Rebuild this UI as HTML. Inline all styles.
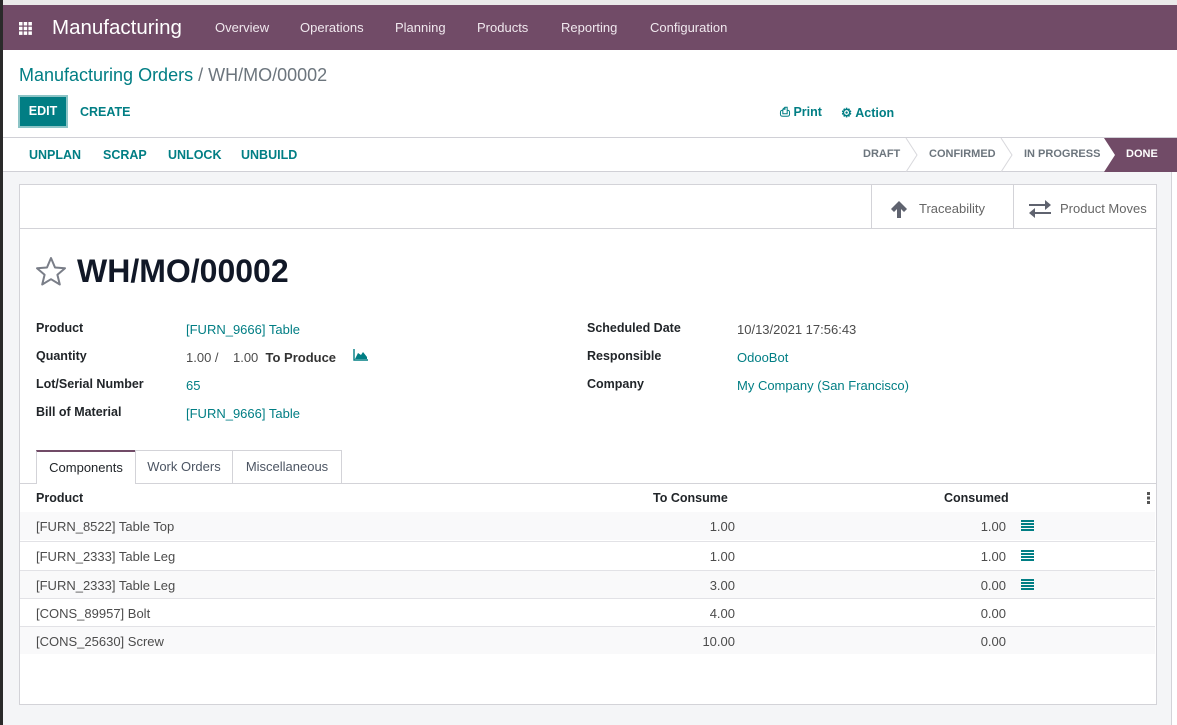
<!DOCTYPE html>
<html><head><meta charset="utf-8"><style>
*{box-sizing:border-box;margin:0;padding:0}
body{width:1177px;height:725px;overflow:hidden;background:#f4f5f7;font-family:"Liberation Sans",sans-serif;font-size:13px;color:#4c4c4c;position:relative}
.abs{position:absolute}
.nav{left:3px;top:5px;width:1174px;height:45px;background:#714b67;color:#fff}
.nav span{position:absolute;top:15px;font-size:13px;color:#f0e8ee}
.cp{left:3px;top:50px;width:1174px;height:88px;background:#fff;border-bottom:1px solid #d0d0d6}
.sb{left:3px;top:138px;width:1174px;height:34px;background:#fff;border-bottom:1px solid #d0d0d6}
.teal{color:#017e84}
.btn{font-weight:bold;font-size:12.5px;color:#017e84}
.sheet{left:19px;top:184px;width:1138px;height:521px;background:#fff;border:1px solid #d3d3d8}
.lbl{font-weight:bold;color:#212529;font-size:12.5px}
.row{left:20px;width:1135px;height:28px;border-top:1px solid #e2e2e6}
.row span{position:absolute;top:7px}
.li{position:absolute;left:1001px;top:8px}
</style></head><body>
<div class="abs" style="left:0;top:0;width:1177px;height:5px;background:#eaeaea"></div>
<div class="abs" style="left:0;top:0;width:3px;height:725px;background:#2a2a2a"></div>
<div class="abs nav">
 <svg class="abs" style="left:16px;top:17px" width="13" height="13" viewBox="0 0 13 13" fill="#fff"><rect x="0" y="0" width="3.5" height="3.5"/><rect x="4.7" y="0" width="3.5" height="3.5"/><rect x="9.4" y="0" width="3.5" height="3.5"/><rect x="0" y="4.7" width="3.5" height="3.5"/><rect x="4.7" y="4.7" width="3.5" height="3.5"/><rect x="9.4" y="4.7" width="3.5" height="3.5"/><rect x="0" y="9.4" width="3.5" height="3.5"/><rect x="4.7" y="9.4" width="3.5" height="3.5"/><rect x="9.4" y="9.4" width="3.5" height="3.5"/></svg>
 <span style="left:49px;top:11px;font-size:20.5px;color:#fff">Manufacturing</span>
 <span style="left:212px">Overview</span><span style="left:297px">Operations</span><span style="left:392px">Planning</span><span style="left:474px">Products</span><span style="left:558px">Reporting</span><span style="left:647px">Configuration</span>
</div>
<div class="abs cp">
 <div class="abs" style="left:16px;top:15px;font-size:18px"><span class="teal">Manufacturing Orders</span> <span style="color:#6c757d">/ WH/MO/00002</span></div>
 <div class="abs" style="left:15px;top:45px;width:50px;height:33px;background:#017e84;border:2px solid #8cc4c6;color:#fff;font-weight:bold;font-size:12.5px;text-align:center;line-height:29px">EDIT</div>
 <div class="abs btn" style="left:77px;top:55px">CREATE</div>
 <div class="abs btn" style="left:777px;top:55px">⎙ Print</div>
 <div class="abs btn" style="left:838px;top:55px">⚙ Action</div>
</div>
<div class="abs sb">
 <div class="abs btn" style="left:26px;top:10px">UNPLAN</div>
 <div class="abs btn" style="left:100px;top:10px">SCRAP</div>
 <div class="abs btn" style="left:165px;top:10px">UNLOCK</div>
 <div class="abs btn" style="left:238px;top:10px">UNBUILD</div>
 <div class="abs" style="left:860px;top:10px;font-size:11px;font-weight:bold;color:#6c757d">DRAFT</div>
 <div class="abs" style="left:926px;top:10px;font-size:11px;font-weight:bold;color:#6c757d">CONFIRMED</div>
 <div class="abs" style="left:1021px;top:10px;font-size:11px;font-weight:bold;color:#6c757d">IN PROGRESS</div>
 <svg class="abs" style="left:0;top:0" width="1174" height="34"><g fill="none" stroke="#d8d8dc"><path d="M903 0 L914 17 L903 34"/><path d="M998 0 L1009 17 L998 34"/></g><path d="M1101 0 H1174 V34 H1101 L1112 17 Z" fill="#714b67"/></svg>
 <div class="abs" style="left:1123px;top:10px;font-size:11px;font-weight:bold;color:#fff">DONE</div>
</div>
<div class="abs" style="left:1171px;top:172px;width:6px;height:553px;background:#fff;border-left:1px solid #d3d3d8"></div>
<div class="abs sheet">
 <div class="abs" style="left:0;top:0;width:1136px;height:44px;border-bottom:1px solid #d3d3d8"></div>
 <div class="abs" style="left:851px;top:0;width:1px;height:44px;background:#d3d3d8"></div>
 <div class="abs" style="left:993px;top:0;width:1px;height:44px;background:#d3d3d8"></div>
 <svg class="abs" style="left:869px;top:14px" width="20" height="20" viewBox="0 0 20 20"><path d="M10 2 L2 10 L5 13 L8 10 V19 H12 V10 L15 13 L18 10 Z" fill="#5f636f"/></svg>
 <div class="abs" style="left:899px;top:16px;color:#666">Traceability</div>
 <svg class="abs" style="left:1009px;top:14px" width="22" height="20" viewBox="0 0 22 20" fill="#5f636f"><path d="M0 6 H16 V2 L22 7 L16 12 V8 H0 Z" transform="translate(0,-1)"/><path d="M22 14 H6 V10 L0 15 L6 20 V16 H22 Z" transform="translate(0,-1)"/></svg>
 <div class="abs" style="left:1040px;top:16px;color:#666">Product Moves</div>
 <svg class="abs" style="left:15px;top:71px" width="32" height="30" viewBox="0 0 32 30"><path d="M16 2 L20 11.5 L30 12.3 L22.4 18.8 L24.8 28.5 L16 23.2 L7.2 28.5 L9.6 18.8 L2 12.3 L12 11.5 Z" fill="none" stroke="#7a7e88" stroke-width="2" stroke-linejoin="round"/></svg>
 <div class="abs" style="left:57px;top:68px;font-size:32px;font-weight:bold;color:#111827">WH/MO/00002</div>
 <div class="abs lbl" style="left:16px;top:136px">Product</div>
 <div class="abs teal" style="left:166px;top:137px">[FURN_9666] Table</div>
 <div class="abs lbl" style="left:16px;top:164px">Quantity</div>
 <div class="abs" style="left:166px;top:165px">1.00 / &nbsp;&nbsp;&nbsp;1.00 &nbsp;<b style="color:#333">To Produce</b></div>
 <svg class="abs" style="left:333px;top:164px" width="15" height="12" viewBox="0 0 15 12"><path d="M1 0 V11 H15" stroke="#017e84" fill="none" stroke-width="1.4"/><path d="M2 10 L5 4 L8 6 L10 3 L14 8 V10 Z" fill="#017e84"/></svg>
 <div class="abs lbl" style="left:16px;top:192px">Lot/Serial Number</div>
 <div class="abs teal" style="left:166px;top:193px">65</div>
 <div class="abs lbl" style="left:16px;top:220px">Bill of Material</div>
 <div class="abs teal" style="left:166px;top:221px">[FURN_9666] Table</div>
 <div class="abs lbl" style="left:567px;top:136px">Scheduled Date</div>
 <div class="abs" style="left:717px;top:137px">10/13/2021 17:56:43</div>
 <div class="abs lbl" style="left:567px;top:164px">Responsible</div>
 <div class="abs teal" style="left:717px;top:165px">OdooBot</div>
 <div class="abs lbl" style="left:567px;top:192px">Company</div>
 <div class="abs teal" style="left:717px;top:193px">My Company (San Francisco)</div>
 <div class="abs" style="left:0;top:298px;width:1136px;height:1px;background:#d3d3d8"></div>
 <div class="abs" style="left:16px;top:265px;width:100px;height:34px;background:#fff;border:1px solid #d3d3d8;border-top:2px solid #714b67;border-bottom:none;text-align:center;line-height:31px;color:#212529">Components</div>
 <div class="abs" style="left:115px;top:265px;width:98px;height:33px;border:1px solid #d3d3d8;border-bottom:none;text-align:center;line-height:32px;color:#4c5563">Work Orders</div>
 <div class="abs" style="left:212px;top:265px;width:110px;height:33px;border:1px solid #d3d3d8;border-bottom:none;text-align:center;line-height:32px;color:#4c5563">Miscellaneous</div>
 <div class="abs lbl" style="left:16px;top:306px">Product</div>
 <div class="abs lbl" style="left:633px;top:306px">To Consume</div>
 <div class="abs lbl" style="left:924px;top:306px">Consumed</div>
 <svg class="abs" style="left:1127px;top:307px" width="4" height="12"><rect x="0" y="0" width="3" height="3" fill="#555"/><rect x="0" y="4.5" width="3" height="3" fill="#555"/><rect x="0" y="9" width="3" height="3" fill="#555"/></svg>
</div>
<div class="abs" style="left:20px;top:512px;width:1135px;height:2px;background:linear-gradient(#ddd,#f4f4f4)"></div>
<div class="abs row" style="top:512px;background:#f9f9fa;border-top:none"><span style="left:16px">[FURN_8522] Table Top</span><span style="right:420px">1.00</span><span style="right:149px">1.00</span><svg class="li" width="13" height="11"><g fill="#017e84"><rect y="0" width="13" height="2"/><rect y="3" width="13" height="2"/><rect y="6" width="13" height="2"/><rect y="9" width="13" height="2"/></g></svg></div>
<div class="abs row" style="top:541px;background:#fff"><span style="left:16px">[FURN_2333] Table Leg</span><span style="right:420px">1.00</span><span style="right:149px">1.00</span><svg class="li" width="13" height="11"><g fill="#017e84"><rect y="0" width="13" height="2"/><rect y="3" width="13" height="2"/><rect y="6" width="13" height="2"/><rect y="9" width="13" height="2"/></g></svg></div>
<div class="abs row" style="top:570px;background:#f9f9fa"><span style="left:16px">[FURN_2333] Table Leg</span><span style="right:420px">3.00</span><span style="right:149px">0.00</span><svg class="li" width="13" height="11"><g fill="#017e84"><rect y="0" width="13" height="2"/><rect y="3" width="13" height="2"/><rect y="6" width="13" height="2"/><rect y="9" width="13" height="2"/></g></svg></div>
<div class="abs row" style="top:598px;background:#fff"><span style="left:16px">[CONS_89957] Bolt</span><span style="right:420px">4.00</span><span style="right:149px">0.00</span></div>
<div class="abs row" style="top:626px;background:#f9f9fa"><span style="left:16px">[CONS_25630] Screw</span><span style="right:420px">10.00</span><span style="right:149px">0.00</span></div>
</body></html>
